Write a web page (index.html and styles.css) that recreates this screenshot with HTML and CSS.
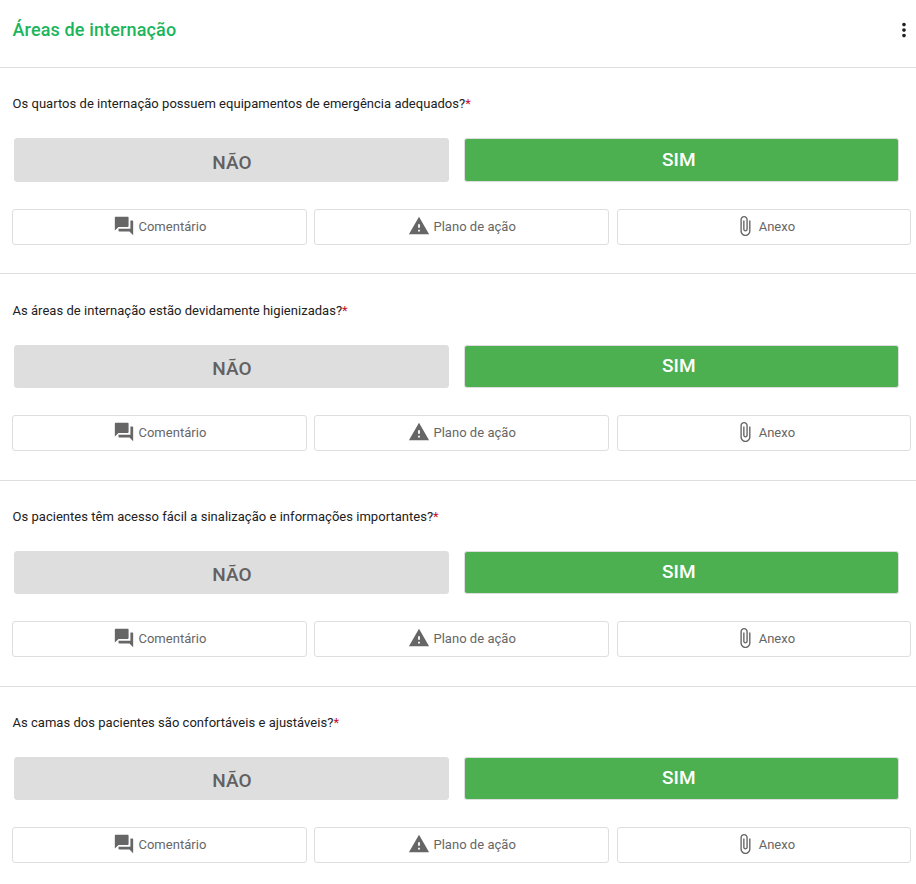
FILE: index.html
```html
<!DOCTYPE html>
<html lang="pt-BR">
<head>
  <meta charset="utf-8">
  <title>Áreas de internação</title>
  <link rel="stylesheet" href="styles.css">
</head>
<body>
  <!-- shared icons -->
  <svg class="sprite" xmlns="http://www.w3.org/2000/svg">
    <symbol id="comment" viewBox="0 0 24 24">
      <path d="M21 6h-2v9H6v2c0 .55.45 1 1 1h11l4 4V7c0-.55-.45-1-1-1zm-4 6V3c0-.55-.45-1-1-1H3c-.55 0-1 .45-1 1v14l4-4h10c.55 0 1-.45 1-1z"/>
    </symbol>
    <symbol id="warning" viewBox="0 0 24 24">
      <path d="M1 21h22L12 2 1 21zm12-3h-2v-2h2v2zm0-4h-2v-4h2v4z"/>
    </symbol>
    <symbol id="attach" viewBox="0 0 24 24">
      <path d="M16.5 6v11.5c0 2.21-1.79 4-4 4s-4-1.79-4-4V5c0-1.38 1.12-2.5 2.5-2.5s2.5 1.12 2.5 2.5v10.5c0 .55-.45 1-1 1s-1-.45-1-1V6H10v9.5c0 1.38 1.12 2.5 2.5 2.5s2.5-1.12 2.5-2.5V5c0-2.21-1.79-4-4-4S7 2.79 7 5v12.5c0 3.04 2.46 5.5 5.5 5.5s5.5-2.46 5.5-5.5V6h-1.5z"/>
    </symbol>
  </svg>

  <div class="header">
    <h1>Áreas de internação</h1>
    <button class="menu-btn" aria-label="Menu">
      <svg viewBox="0 0 24 24"><path d="M12 8c1.1 0 2-.9 2-2s-.9-2-2-2-2 .9-2 2 .9 2 2 2zm0 2c-1.1 0-2 .9-2 2s.9 2 2 2 2-.9 2-2-.9-2-2-2zm0 6c-1.1 0-2 .9-2 2s.9 2 2 2 2-.9 2-2-.9-2-2-2z"/></svg>
    </button>
  </div>

  <div class="item">
    <p class="question">Os quartos de internação possuem equipamentos de emergência adequados?<span class="required">*</span></p>
    <div class="answers">
      <button class="answer-btn">NÃO</button>
      <button class="answer-btn selected">SIM</button>
    </div>
    <div class="actions">
      <button class="action-btn"><svg><use href="#comment"/></svg>Comentário</button>
      <button class="action-btn"><svg><use href="#warning"/></svg>Plano de ação</button>
      <button class="action-btn"><svg><use href="#attach"/></svg>Anexo</button>
    </div>
  </div>

  <div class="item">
    <p class="question">As áreas de internação estão devidamente higienizadas?<span class="required">*</span></p>
    <div class="answers">
      <button class="answer-btn">NÃO</button>
      <button class="answer-btn selected">SIM</button>
    </div>
    <div class="actions">
      <button class="action-btn"><svg><use href="#comment"/></svg>Comentário</button>
      <button class="action-btn"><svg><use href="#warning"/></svg>Plano de ação</button>
      <button class="action-btn"><svg><use href="#attach"/></svg>Anexo</button>
    </div>
  </div>

  <div class="item">
    <p class="question">Os pacientes têm acesso fácil a sinalização e informações importantes?<span class="required">*</span></p>
    <div class="answers">
      <button class="answer-btn">NÃO</button>
      <button class="answer-btn selected">SIM</button>
    </div>
    <div class="actions">
      <button class="action-btn"><svg><use href="#comment"/></svg>Comentário</button>
      <button class="action-btn"><svg><use href="#warning"/></svg>Plano de ação</button>
      <button class="action-btn"><svg><use href="#attach"/></svg>Anexo</button>
    </div>
  </div>

  <div class="item">
    <p class="question">As camas dos pacientes são confortáveis e ajustáveis?<span class="required">*</span></p>
    <div class="answers">
      <button class="answer-btn">NÃO</button>
      <button class="answer-btn selected">SIM</button>
    </div>
    <div class="actions">
      <button class="action-btn"><svg><use href="#comment"/></svg>Comentário</button>
      <button class="action-btn"><svg><use href="#warning"/></svg>Plano de ação</button>
      <button class="action-btn"><svg><use href="#attach"/></svg>Anexo</button>
    </div>
  </div>
</body>
</html>
```
FILE: styles.css
```css
* {
  margin: 0;
  padding: 0;
  box-sizing: border-box;
}

body {
  background: #ffffff;
  color: #212121;
  font-family: Roboto, sans-serif;
  overflow: hidden;
}

button {
  font-family: inherit;
  cursor: pointer;
}

.sprite {
  display: none;
}

.header {
  display: flex;
  align-items: center;
  justify-content: space-between;
  height: 67.3px;
  padding: 0 1px 8px 12.5px;
}

.header h1 {
  color: #1bb55c;
  font-size: 18px;
  font-weight: 500;
  letter-spacing: 0.14px;
}

.menu-btn {
  width: 22px;
  height: 22px;
  border: none;
  background: transparent;
}

.menu-btn svg {
  display: block;
  width: 22px;
  height: 22px;
  fill: #212121;
}

.item {
  height: 206.2px;
  border-top: 1px solid #dedede;
}

.question {
  height: 70.1px;
  padding: 26.2px 12.5px 0;
  font-size: 13px;
  line-height: 20px;
  letter-spacing: 0.03px;
}

.required {
  color: #c8102e;
}

.answers {
  display: grid;
  grid-template-columns: 1fr 1fr;
  gap: 15px;
  padding: 0 17px 0 14px;
}

.answer-btn {
  height: 43.2px;
  padding: 4.6px 0 0 0.8px;
  border: 1px solid #dedede;
  border-radius: 3px;
  background: #dedede;
  color: #616161;
  font-size: 19px;
  font-weight: 500;
  letter-spacing: 0.1px;
}

.answer-btn.selected {
  padding: 0 5.4px 1.4px 0;
  background: #4caf50;
  color: #ffffff;
}

.actions {
  display: grid;
  grid-template-columns: repeat(3, 1fr);
  gap: 7.8px;
  margin-top: 27px;
  padding: 0 5px 0 12.1px;
}

.action-btn {
  display: flex;
  align-items: center;
  justify-content: center;
  gap: 3px;
  height: 36.2px;
  padding: 0 0 1.2px 1.2px;
  border: 1px solid #dedede;
  border-radius: 3px;
  background: #ffffff;
  color: #666666;
  font-size: 13px;
  letter-spacing: 0.03px;
}

.action-btn svg {
  width: 22px;
  height: 22px;
  margin-bottom: 0.6px;
  fill: #666666;
}
```
